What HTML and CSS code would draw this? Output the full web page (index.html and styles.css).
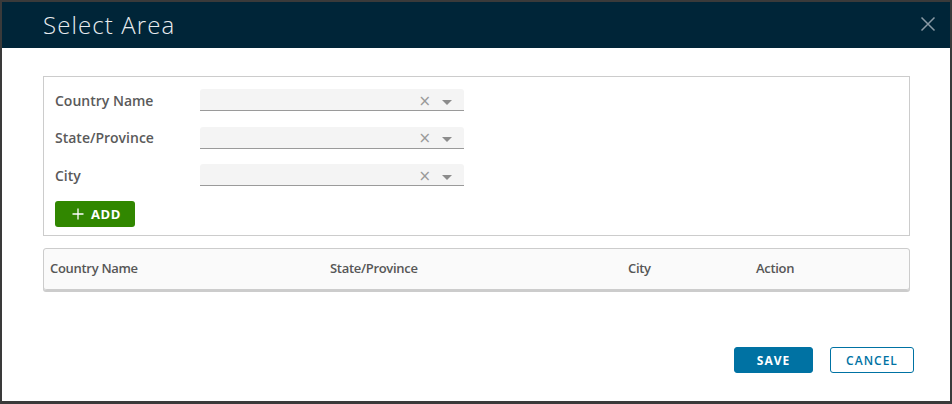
FILE: index.html
```html
<!DOCTYPE html>
<html>
<head>
<meta charset="utf-8">
<link rel="stylesheet" href="styles.css">
</head>
<body>
<div class="modal">
  <div class="modal-header">
    <h3 class="modal-title">Select Area</h3>
    <button class="close" aria-label="Close">
      <svg width="16" height="16" viewBox="0 0 16 16"><path d="M1.5 1.5 L14.5 14.5 M14.5 1.5 L1.5 14.5" stroke="#8a9aa5" stroke-width="1.5" fill="none"/></svg>
    </button>
  </div>
  <div class="modal-body">
    <div class="form-box">
      <div class="form-row">
        <label class="label">Country Name</label>
        <div class="select">
          <span class="clear">×</span>
          <svg class="caret" width="10" height="5" viewBox="0 0 10 5"><path d="M0 0 L10 0 L5 5 Z" fill="#8c8c8c"/></svg>
        </div>
      </div>
      <div class="form-row">
        <label class="label">State/Province</label>
        <div class="select">
          <span class="clear">×</span>
          <svg class="caret" width="10" height="5" viewBox="0 0 10 5"><path d="M0 0 L10 0 L5 5 Z" fill="#8c8c8c"/></svg>
        </div>
      </div>
      <div class="form-row">
        <label class="label">City</label>
        <div class="select">
          <span class="clear">×</span>
          <svg class="caret" width="10" height="5" viewBox="0 0 10 5"><path d="M0 0 L10 0 L5 5 Z" fill="#8c8c8c"/></svg>
        </div>
      </div>
      <button class="btn-add">
        <svg width="12" height="12" viewBox="0 0 12 12"><path d="M6 0.5 V11.5 M0.5 6 H11.5" stroke="#fff" stroke-width="1.3" fill="none"/></svg>
        <span>ADD</span>
      </button>
    </div>
    <div class="grid">
      <div class="grid-head">
        <div class="col c1">Country Name</div>
        <div class="col c2">State/Province</div>
        <div class="col c3">City</div>
        <div class="col c4">Action</div>
      </div>
    </div>
  </div>
  <div class="modal-footer">
    <button class="btn btn-primary">SAVE</button>
    <button class="btn btn-outline">CANCEL</button>
  </div>
</div>
</body>
</html>
```

FILE: styles.css
```css
html, body {
  margin: 0;
  padding: 0;
}
body {
  background: #3a3a3a;
  width: 952px;
  height: 404px;
  overflow: hidden;
  font-family: "Open Sans", "Liberation Sans", sans-serif;
}
.modal {
  margin: 2px 2px 0 2px;
  width: 948px;
  height: 399px;
  background: #fff;
  display: flex;
  flex-direction: column;
}
.modal-header {
  height: 46px;
  background: #002538;
  display: flex;
  align-items: center;
  justify-content: space-between;
  padding: 0 14px 0 41px;
  box-sizing: border-box;
}
.modal-title {
  margin: 0;
  font-size: 24px;
  font-weight: 300;
  color: #e8ecef;
  letter-spacing: 1.1px;
  line-height: 46px;
}
.close {
  background: none;
  border: 0;
  padding: 0;
  width: 16px;
  height: 16px;
  display: flex;
  margin-top: -2px;
}
.modal-body {
  padding: 28px 40px 0 41px;
  flex: 1;
}
.form-box {
  border: 1px solid #cccccc;
  padding: 12px 11px 8px 11px;
}
.form-row {
  display: flex;
  align-items: center;
  height: 22px;
  margin-bottom: 15.5px;
}
.label {
  width: 145px;
  font-size: 14px;
  font-weight: 600;
  color: #5a5a5a;
}
.select {
  width: 264px;
  height: 22px;
  box-sizing: border-box;
  background: #f4f4f4;
  border-bottom: 1px solid #9a9a9a;
  border-radius: 3px 3px 0 0;
  display: flex;
  align-items: center;
  justify-content: flex-end;
  padding: 3px 12px 0 0;
}
.clear {
  font-size: 15px;
  color: #9a9a9a;
  line-height: 1;
  margin-right: 11px;
  font-family: "DejaVu Sans", sans-serif;
}
.caret {
  display: block;
  margin-top: 2px;
}
.btn-add {
  margin-top: -0.5px;
  height: 26px;
  width: 80px;
  background: #318700;
  border: 0;
  border-radius: 3px;
  color: #fff;
  font-family: "Open Sans", sans-serif;
  font-weight: 700;
  font-size: 13px;
  letter-spacing: 0.6px;
  display: flex;
  align-items: center;
  gap: 7px;
  padding: 0 0 0 17px;
  box-sizing: border-box;
}
.grid {
  margin-top: 12px;
  border: 1px solid #cccccc;
  border-radius: 3px;
  background: #fafafa;
  box-shadow: 0 1px 0 #cccccc;
}
.grid-head {
  display: flex;
  height: 40px;
  align-items: center;
  border-bottom: 1px solid #cccccc;
  border-radius: 3px;
}
.col {
  font-size: 13px;
  font-weight: 600;
  color: #565656;
  letter-spacing: -0.3px;
  box-sizing: border-box;
  padding-left: 6px;
  position: relative;
  top: -1px;
}
.c1 { width: 280px; }
.c2 { width: 298px; }
.c3 { width: 128px; }
.c4 { flex: 1; }
.modal-footer {
  display: flex;
  justify-content: flex-end;
  align-items: flex-end;
  gap: 17px;
  padding: 0 36px 28px 0;
}
.btn {
  height: 26px;
  border-radius: 3px;
  font-family: "Open Sans", sans-serif;
  font-size: 12px;
  font-weight: 700;
  letter-spacing: 1px;
  padding: 0;
  box-sizing: border-box;
}
.btn-primary {
  width: 79px;
  background: #0072a3;
  border: 1px solid #0072a3;
  color: #fff;
}
.btn-outline {
  width: 84px;
  background: #fff;
  border: 1px solid #0072a3;
  color: #0072a3;
  font-weight: 600;
}
```
